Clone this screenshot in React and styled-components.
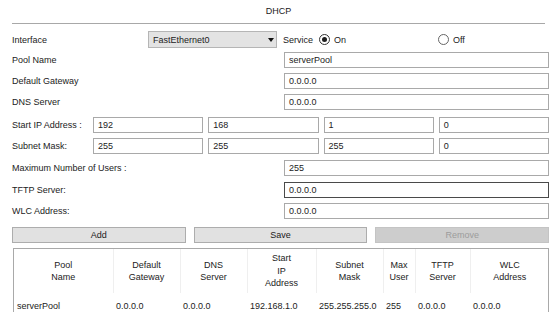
import React from "react";
import styled, { createGlobalStyle } from "styled-components";

const Global = createGlobalStyle`
  html, body { margin: 0; padding: 0; background: #ffffff; }
  body {
    font-family: "Liberation Sans", Arial, sans-serif;
    font-size: 9px;
    color: #1a1a1a;
  }
  * { box-sizing: border-box; }
`;

const Page = styled.div`
  width: 554px;
  height: 312px;
  overflow: hidden;
  padding: 0 5px 0 12px;
`;

const Title = styled.div`
  height: 24px;
  margin-right: 4px;
  border-bottom: 1px solid #a8a8a8;
  display: flex;
  align-items: center;
  justify-content: center;
  padding-bottom: 1px;
  color: #222;
`;

const Form = styled.div`
  display: flex;
  flex-direction: column;
  gap: 5px;
  padding-top: 7px;
`;

const Row = styled.div`
  display: grid;
  grid-template-columns: ${(p) => p.$cols};
  column-gap: ${(p) => p.$gap || 0}px;
  align-items: center;
  height: 16px;
  margin-top: ${(p) => p.$extra || 0}px;
`;

const Label = styled.span`
  white-space: nowrap;
  color: #222;
`;

const Input = styled.div`
  height: 16px;
  border: 1px solid ${(p) => (p.$focused ? "#4a4a4a" : "#a9a9a9")};
  background: #fff;
  padding-left: 4px;
  display: flex;
  align-items: center;
  color: #222;
  white-space: nowrap;
`;

const Select = styled.div`
  height: 17px;
  border: 1px solid #b5b5b5;
  background: #e3e3e3;
  padding: 0 2px 0 4px;
  display: flex;
  align-items: center;
  justify-content: space-between;
  color: #222;
`;

const Arrow = styled.span`
  width: 0;
  height: 0;
  border-left: 3px solid transparent;
  border-right: 3px solid transparent;
  border-top: 4px solid #111;
`;

const ServiceGroup = styled.div`
  display: flex;
  align-items: center;
  padding-left: 6px;
`;

const RadioOption = styled.label`
  display: flex;
  align-items: center;
  gap: 4px;
  margin-left: ${(p) => p.$offset || 0}px;
`;

const RadioCircle = styled.span`
  width: 11px;
  height: 11px;
  border-radius: 50%;
  border: 1px solid ${(p) => (p.$checked ? "#333" : "#666")};
  background: #fff;
  display: flex;
  align-items: center;
  justify-content: center;
  &::after {
    content: "";
    width: 5px;
    height: 5px;
    border-radius: 50%;
    background: ${(p) => (p.$checked ? "#1e1e1e" : "transparent")};
  }
`;

const Button = styled.div`
  height: 16px;
  border: 1px solid ${(p) => (p.$disabled ? "#c4c4c4" : "#adadad")};
  background: ${(p) => (p.$disabled ? "#cdcdcd" : "#e1e1e1")};
  color: ${(p) => (p.$disabled ? "#9c9c9c" : "#1a1a1a")};
  display: flex;
  align-items: center;
  justify-content: center;
`;

const TableWrap = styled.div`
  margin-left: 1px;
  border: 1px solid #a9a9a9;
  border-bottom: none;
  height: 70px;
  overflow: hidden;
`;

const Table = styled.table`
  border-collapse: collapse;
  table-layout: fixed;
  width: 535px;
`;

const Th = styled.th`
  font-weight: normal;
  text-align: center;
  vertical-align: middle;
  height: 44px;
  line-height: 12.5px;
  padding: 0;
  border-right: 1px solid #efefef;
  color: #222;
  &:last-child { border-right: none; }
`;

const Td = styled.td`
  padding: 0 0 0 3px;
  height: 25px;
  text-align: left;
  white-space: nowrap;
  color: #222;
`;

const columns = [
  { w: 99, h: ["Pool", "Name"] },
  { w: 67, h: ["Default", "Gateway"] },
  { w: 67, h: ["DNS", "Server"] },
  { w: 69, h: ["Start", "IP", "Address"] },
  { w: 67, h: ["Subnet", "Mask"] },
  { w: 32, h: ["Max", "User"] },
  { w: 55, h: ["TFTP", "Server"] },
  { w: 79, h: ["WLC", "Address"] },
];

const dataRow = [
  "serverPool",
  "0.0.0.0",
  "0.0.0.0",
  "192.168.1.0",
  "255.255.255.0",
  "255",
  "0.0.0.0",
  "0.0.0.0",
];

const fields = [
  { label: "Pool Name", value: "serverPool" },
  { label: "Default Gateway", value: "0.0.0.0" },
  { label: "DNS Server", value: "0.0.0.0" },
];

const fields2 = [
  { label: "Maximum Number of Users :", value: "255", extra: 1 },
  { label: "TFTP Server:", value: "0.0.0.0", focused: true, extra: 1 },
  { label: "WLC Address:", value: "0.0.0.0" },
];

export default function App() {
  return (
    <Page>
      <Global />
      <Title>DHCP</Title>
      <Form>
        <Row $cols="136px 129px 1fr">
          <Label>Interface</Label>
          <Select>
            <span>FastEthernet0</span>
            <Arrow />
          </Select>
          <ServiceGroup>
            <span>Service</span>
            <RadioOption $offset={6}>
              <RadioCircle $checked />
              <span>On</span>
            </RadioOption>
            <RadioOption $offset={92}>
              <RadioCircle />
              <span>Off</span>
            </RadioOption>
          </ServiceGroup>
        </Row>
        {fields.map((f) => (
          <Row key={f.label} $cols="272px 1fr">
            <Label>{f.label}</Label>
            <Input>{f.value}</Input>
          </Row>
        ))}
        <Row $cols="76px repeat(4, 1fr)" $gap={5} $extra={2}>
          <Label>Start IP Address :</Label>
          <Input>192</Input>
          <Input>168</Input>
          <Input>1</Input>
          <Input>0</Input>
        </Row>
        <Row $cols="76px repeat(4, 1fr)" $gap={5}>
          <Label>Subnet Mask:</Label>
          <Input>255</Input>
          <Input>255</Input>
          <Input>255</Input>
          <Input>0</Input>
        </Row>
        {fields2.map((f) => (
          <Row key={f.label} $cols="272px 1fr" $extra={f.extra}>
            <Label>{f.label}</Label>
            <Input $focused={f.focused}>{f.value}</Input>
          </Row>
        ))}
        <Row $cols="repeat(3, 1fr)" $gap={8} $extra={3}>
          <Button>Add</Button>
          <Button>Save</Button>
          <Button $disabled>Remove</Button>
        </Row>
        <TableWrap>
          <Table>
            <colgroup>
              {columns.map((c, i) => (
                <col key={i} style={{ width: c.w }} />
              ))}
            </colgroup>
            <thead>
              <tr>
                {columns.map((c, i) => (
                  <Th key={i}>
                    {c.h.map((line, j) => (
                      <React.Fragment key={j}>
                        {line}
                        {j < c.h.length - 1 && <br />}
                      </React.Fragment>
                    ))}
                  </Th>
                ))}
              </tr>
            </thead>
            <tbody>
              <tr>
                {dataRow.map((v, i) => (
                  <Td key={i}>{v}</Td>
                ))}
              </tr>
            </tbody>
          </Table>
        </TableWrap>
      </Form>
    </Page>
  );
}
